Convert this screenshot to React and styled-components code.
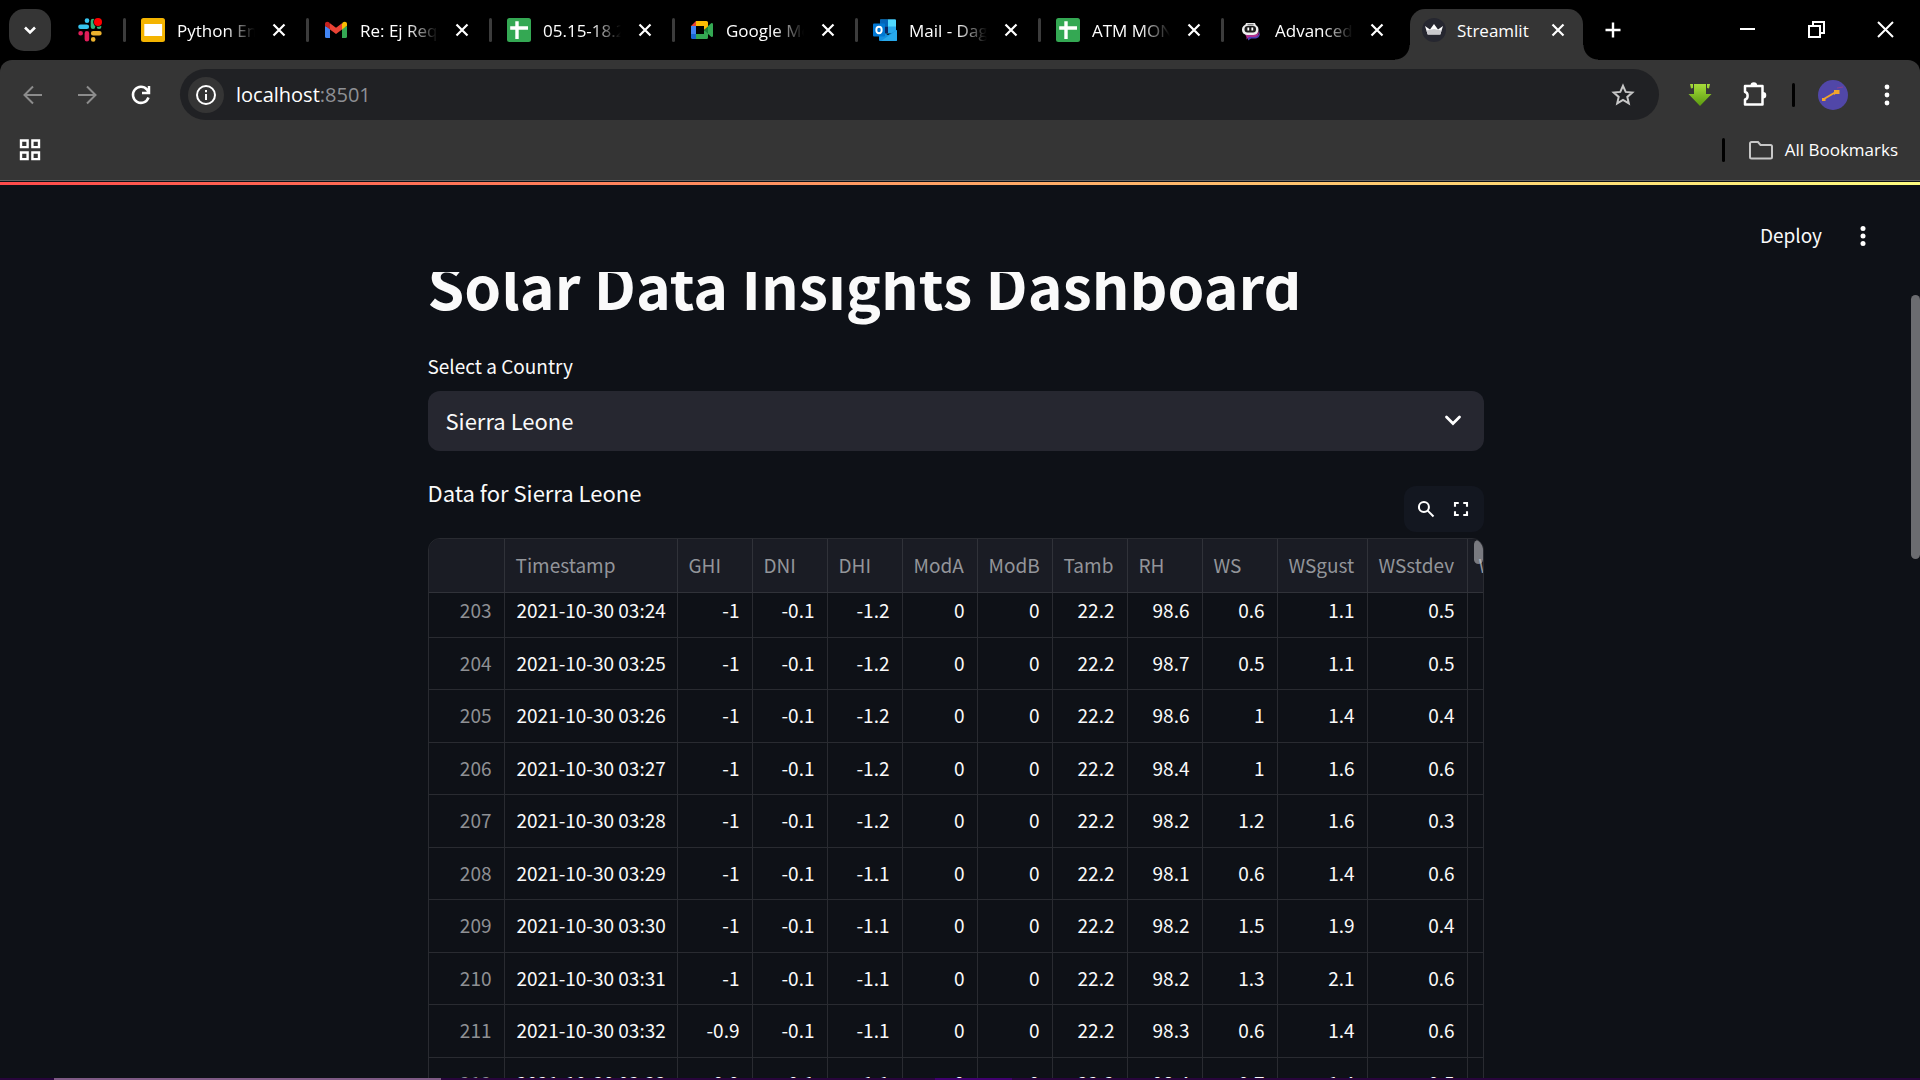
import React, { useLayoutEffect, useRef } from 'react';
import styled, { createGlobalStyle, css } from 'styled-components';

const uiFont = '"Open Sans", "Noto Sans", sans-serif';
const pageFont = '"Noto Sans CJK SC", "Noto Sans", sans-serif';

const GlobalStyle = createGlobalStyle`
  * { box-sizing: border-box; }
  html, body { margin: 0; height: 100%; background: #0e1117; }
  #root { height: 100%; }
  button, select { font: inherit; color: inherit; }
`;

/* ---------- browser frame ---------- */

const Screen = styled.div`
  display: flex;
  flex-direction: column;
  height: 100vh;
  overflow: hidden;
  background: #0e1117;
  color: #ffffff;
  font-family: ${uiFont};
`;

const TabStrip = styled.nav`
  display: flex;
  flex: none;
  height: 60px;
  padding-left: 9px;
  background: #000000;
`;

const PlainButton = styled.button`
  display: flex;
  flex: none;
  align-items: center;
  justify-content: center;
  padding: 0;
  border: 0;
  background: transparent;
`;

const TabSearch = styled(PlainButton)`
  width: 42px;
  height: 42px;
  margin: 9px 9px 0 0;
  border-radius: 15px;
  background: #353535;
`;

const Tab = styled.div`
  display: flex;
  flex: none;
  align-items: center;
  gap: 12px;
  height: 60px;
  width: ${(p) => (p.$pinned ? '66px' : '183px')};
  padding-left: ${(p) => (p.$pinned ? '18px' : '15px')};

  &::after {
    content: '';
    width: 3px;
    height: 24px;
    margin-left: ${(p) => (p.$pinned ? '9px' : '3px')};
    border-radius: 2px;
    background: ${(p) => (p.$last ? 'transparent' : '#3c3c3c')};
  }
`;

const ActiveTab = styled.div`
  position: relative;
  display: flex;
  flex: none;
  align-items: center;
  gap: 11px;
  width: 173px;
  height: 51px;
  margin: 9px 9px 0 3px;
  padding: 0 12px 9px;
  border-radius: 15px 15px 0 0;
  background: #353535;

  &::before,
  &::after {
    content: '';
    position: absolute;
    bottom: 0;
    width: 15px;
    height: 15px;
  }
  &::before {
    right: 100%;
    background: radial-gradient(circle at 0 0, transparent 14px, #353535 15px);
  }
  &::after {
    left: 100%;
    background: radial-gradient(circle at 100% 0, transparent 14px, #353535 15px);
  }
`;

const TabTitle = styled.span`
  flex: none;
  width: 78px;
  padding-top: 2px;
  overflow: hidden;
  white-space: nowrap;
  font-size: 17px;
  line-height: 24px;
  ${(p) =>
    p.$fade &&
    css`
      mask-image: linear-gradient(to right, #000 48px, transparent 78px);
    `}
`;

const TabClose = styled(PlainButton)`
  width: 24px;
  height: 24px;
`;

const NewTab = styled(PlainButton)`
  width: 42px;
  height: 42px;
  margin-top: 9px;
`;

const WindowControls = styled.div`
  display: flex;
  margin-left: auto;
`;

const WindowButton = styled(PlainButton)`
  width: 69px;
  height: 60px;
`;

const Chrome = styled.header`
  flex: none;
  border-radius: 12px 12px 0 0;
  background: #353535;
  border-bottom: 1px solid #636363;
`;

const ChromeBackdrop = styled.div`
  flex: none;
  background: #000000;
`;

const Toolbar = styled.div`
  display: flex;
  align-items: center;
  height: 60px;
  padding: 9px 12px 0;
`;

const NavGroup = styled.div`
  display: flex;
  gap: 12px;
  margin-right: 18px;
`;

const ActionGroup = styled.div`
  display: flex;
  align-items: center;
  gap: 12px;
  margin-left: 20px;
`;

const IconButton = styled(PlainButton)`
  width: 42px;
  height: 42px;
`;

const AddressBar = styled.div`
  display: flex;
  flex: 1;
  align-items: center;
  height: 51px;
  padding: 0 15px 0 8px;
  border-radius: 26px;
  background: #202124;
`;

const SiteInfo = styled(PlainButton)`
  width: 36px;
  height: 36px;
  margin-right: 12px;
  border-radius: 18px;
  background: #353535;
`;

const Url = styled.span`
  flex: 1;
  font-size: 20px;
  line-height: 28px;

  span { color: #8e9094; }
`;

const Divider = styled.span`
  flex: none;
  width: 3px;
  height: 24px;
  margin: 0 5px;
  border-radius: 2px;
  background: #000000;
`;

const BookmarksBar = styled.div`
  display: flex;
  align-items: center;
  height: 60px;
  padding: 0 22px 0 9px;
`;

const AllBookmarks = styled(PlainButton)`
  gap: 12px;
  margin-left: 19px;
  font-size: 17px;
  line-height: 24px;
`;

const Spacer = styled.span`
  flex: 1;
`;

/* ---------- dashboard ---------- */

const Decoration = styled.div`
  flex: none;
  height: 3px;
  margin-top: 1px;
  background: linear-gradient(90deg, #ff4b4b, #fffd80);
`;

const Viewport = styled.div`
  display: flex;
  flex: 1;
  min-height: 0;
  font-family: ${pageFont};
  color: #fafafa;
`;

const AppColumn = styled.div`
  display: flex;
  flex: 1;
  flex-direction: column;
  min-width: 0;
`;

const AppHeader = styled.div`
  display: flex;
  flex: none;
  align-items: center;
  justify-content: flex-end;
  gap: 20px;
  height: 87px;
  padding: 15px 27px 0 0;
`;

const Deploy = styled(PlainButton)`
  padding-bottom: 2px;
  font-size: 19px;
  line-height: 28px;
`;

const Main = styled.main`
  flex: 1;
  min-height: 0;
  overflow: hidden;
`;

const Block = styled.div`
  width: 100%;
  max-width: 1056px;
  margin: 0 auto;
`;

const Title = styled.h1`
  margin: -31px 0 23px;
  font-size: 59px;
  line-height: 88px;
  font-weight: 700;
`;

const FieldLabel = styled.label`
  display: block;
  height: 39px;
  font-size: 19px;
  line-height: 28px;
`;

const SelectBox = styled.div`
  position: relative;
  height: 60px;

  svg {
    position: absolute;
    right: 19px;
    top: 17px;
    pointer-events: none;
  }
`;

const Select = styled.select`
  appearance: none;
  width: 100%;
  height: 60px;
  padding: 0 18px 2px;
  border: 0;
  border-radius: 12px;
  background: #262730;
  font-size: 22px;
  line-height: 32px;
`;

const CaptionRow = styled.div`
  display: flex;
  justify-content: space-between;
  height: 87px;
  padding: 24px 0 6px;
`;

const Caption = styled.p`
  margin: 0;
  font-size: 22px;
  line-height: 34px;
`;

const TableTools = styled.div`
  display: flex;
  align-items: center;
  align-self: flex-end;
  justify-content: center;
  gap: 5px;
  width: 80px;
  height: 46px;
  border-radius: 12px;
  background: #131720;
`;

const ToolButton = styled(PlainButton)`
  width: 30px;
  height: 30px;
`;

const TableFrame = styled.div`
  position: relative;
  height: 600px;
  border: 1px solid #292b31;
  border-radius: 12px;
  overflow: hidden;
`;

const TableScroll = styled.div`
  height: 100%;
  overflow: hidden;
`;

const TableThumb = styled.span`
  position: absolute;
  z-index: 2;
  top: 1px;
  right: 0;
  width: 9px;
  height: 24px;
  border-radius: 5px;
  background: rgba(200, 200, 204, 0.55);
`;

const Table = styled.table`
  width: 1139px;
  table-layout: fixed;
  border-collapse: separate;
  border-spacing: 0;
  font-size: 19px;
  line-height: 28px;
`;

const HeadCell = styled.th`
  position: sticky;
  top: 0;
  z-index: 1;
  height: 54px;
  padding: 0 0 2px 11px;
  border-right: 1px solid #303239;
  border-bottom: 1px solid #303239;
  background: #1a1c24;
  color: #93959a;
  font-weight: 400;
  text-align: left;
  white-space: nowrap;
`;

const Row = styled.tr`
  height: ${(p) => (p.$tall ? '53px' : '52px')};
`;

const Cell = styled.td`
  padding: 0 12px 2px;
  border-right: 1px solid #292b31;
  border-bottom: 1px solid #292b31;
  text-align: ${(p) => (p.$left ? 'left' : 'right')};
  white-space: nowrap;
`;

const IndexCell = styled(Cell)`
  color: #8e9094;
`;

const PageScroll = styled.div`
  flex: none;
  width: 9px;
  padding-top: 110px;
`;

const PageThumb = styled.div`
  height: 264px;
  border-radius: 5px;
  background: #6b6c70;
`;

const TaskEdge = styled.footer`
  flex: none;
  display: flex;
  height: 2px;
  padding-left: 54px;
  background: #28053c;
`;

const TaskMark = styled.span`
  width: ${(p) => p.$width}px;
  margin-right: 494px;
  background: ${(p) => p.$color};
`;

/* ---------- icons ---------- */

const Stroke = ({ size = 24, width = 2, color = '#fff', children }) => (
  <svg width={size} height={size} viewBox="0 0 24 24" fill="none" stroke={color} strokeWidth={width} aria-hidden="true">
    {children}
  </svg>
);

const Cross = () => (
  <Stroke width={2.2}>
    <path d="M6.5 6.5l11 11M17.5 6.5l-11 11" />
  </Stroke>
);

const Dots = ({ r = 2.4, gap = 8 }) => (
  <svg width="24" height="24" viewBox="0 0 24 24" fill="#fff" aria-hidden="true">
    <circle cx="12" cy={12 - gap} r={r} />
    <circle cx="12" cy="12" r={r} />
    <circle cx="12" cy={12 + gap} r={r} />
  </svg>
);

const FaviconSvg = styled.svg`
  flex: none;
  width: 24px;
  height: 24px;
`;

const Favicon = ({ children }) => (
  <FaviconSvg viewBox="0 0 24 24" aria-hidden="true">
    {children}
  </FaviconSvg>
);

const SlackIcon = () => (
  <Favicon>
    <g strokeWidth="4.6" strokeLinecap="round">
      <path d="M9 2.6v0.1M2.5 8.8h6.3" stroke="#36c5f0" />
      <path d="M15 8.8V3M21 8.8h.1" stroke="#2eb67d" />
      <path d="M15.2 15.3h6.2M15.2 21.3v.1" stroke="#ecb22e" />
      <path d="M2.6 15.3h.1M8.9 15.3v6" stroke="#e01e5a" />
    </g>
    <circle cx="20" cy="4" r="4.8" fill="#000" />
    <circle cx="20" cy="4" r="4" fill="#ff0000" />
  </Favicon>
);

const SlidesIcon = () => (
  <Favicon>
    <rect width="24" height="24" rx="2.5" fill="#f4b400" />
    <rect x="3.3" y="6" width="17.8" height="12" fill="#fff" />
  </Favicon>
);

const GmailIcon = () => (
  <Favicon>
    <path d="M1 8v10.5A1.500 1.500 0 0 0 2.500 20H6V10z" fill="#4285f4" />
    <path d="M23 8v10.500a1.500 1.500 0 0 1-1.500 1.500H18V10z" fill="#34a853" />
    <path d="M18 5.500V11.500l5-3.800V6c0-2.400-2.500-3-4-1.700z" fill="#fbbc04" />
    <path d="M6 5.500V11.500L1 7.700V6c0-2.400 2.500-3 4-1.700z" fill="#c5221f" />
    <path d="M6 11.500V5.300l6 4.500 6-4.500v6.200L12 16z" fill="#ea4335" />
  </Favicon>
);

const SheetsIcon = () => (
  <Favicon>
    <rect width="24" height="24" rx="2.500" fill="#34a853" />
    <path d="M10 3.200V21M3.200 10H21" stroke="#fff" strokeWidth="3.400" />
  </Favicon>
);

const MeetIcon = () => (
  <Favicon>
    <path d="M1 8l5-5v5z" fill="#ea4335" />
    <path d="M1 8h5v8H1z" fill="#4285f4" />
    <path d="M1 16h5v5H2.500A1.500 1.500 0 0 1 1 19.500z" fill="#1967d2" />
    <path d="M6 3h10.500A1.500 1.500 0 0 1 18 4.500v5L14 12V8H6z" fill="#fbbc04" />
    <path d="M6 16h8v-4l4 2.500v5a1.500 1.500 0 0 1-1.500 1.500H6z" fill="#34a853" />
    <path d="M14 12l7-6.500c.8-.7 2-.2 2 .800v11.400c0 1-1.200 1.500-2 .800z" fill="#188038" />
    <path d="M18 8.300l3-2.800c.8-.7 2-.2 2 .800v11.400c0 1-1.200 1.500-2 .800l-3-2.800z" fill="#34a853" />
  </Favicon>
);

const OutlookIcon = () => (
  <Favicon>
    <rect x="7" y="1.500" width="16" height="14" rx="1" fill="#28a8ea" />
    <path d="M7 1.500h8v7H7z" fill="#0364b8" />
    <path d="M15 1.500h7a1 1 0 0 1 1 1v6h-8z" fill="#50d9ff" />
    <path d="M7 8.500h8V15H7z" fill="#0a2767" />
    <path d="M6 12l9 5 9-5v10a1 1 0 0 1-1 1H7a1 1 0 0 1-1-1z" fill="#1490df" />
    <path d="M24 12v10a1 1 0 0 1-1 1H8z" fill="#28a8ea" />
    <rect y="5.500" width="12" height="13" rx="1" fill="#0078d4" />
    <ellipse cx="6" cy="12" rx="2.700" ry="3.200" fill="none" stroke="#fff" strokeWidth="1.900" />
  </Favicon>
);

const BotIcon = () => (
  <Favicon>
    <path d="M8 18h8c3.500 0 5-2 5-7v3c0 5-2 6.500-6 6.500h-3l-3 2V20z" fill="#4c3fb5" />
    <path d="M6 16h9c3 0 5-1 5-4v2c0 3-2 5-5 5h-5l-2.500 2.500V19z" fill="#b0308f" />
    <path d="M7 5h9l1 3H6z" fill="#e4e4e4" />
    <rect x="3" y="6.500" width="16.500" height="10.500" rx="5" fill="#eeeeee" />
    <rect x="5.500" y="8" width="11.500" height="6.500" rx="3" fill="#1b1b1b" />
    <path d="M9.300 9.500v3M13.300 9.500v3" stroke="#fff" strokeWidth="1.800" />
    <path d="M8.500 6.800h6" stroke="#444" strokeWidth="0.900" />
  </Favicon>
);

const CrownIcon = () => (
  <Favicon>
    <circle cx="12" cy="12" r="12" fill="#262730" />
    <path d="M3 8l5 3.500L12 6l4 5.500L21 8l-2.700 8.500H5.700z" fill="#ffffff" />
    <path d="M4.500 12.500L12 11l7.500 1.500-1.200 4H5.700z" fill="#c9c9cd" />
  </Favicon>
);

const DownloadArrow = () => (
  <svg width="24" height="24" viewBox="0 0 24 24" aria-hidden="true">
    <defs>
      <linearGradient id="arrowFill" x1="0" y1="0" x2="0" y2="1">
        <stop offset="0" stopColor="#a6dc3a" />
        <stop offset="1" stopColor="#5a9a10" />
      </linearGradient>
    </defs>
    <path d="M2 1h3v4l-2 .5zM22 1h-3v4l2 .5zM6 1h12v10h5.500L12 23 .5 11H6z" fill="url(#arrowFill)" />
  </svg>
);

/* ---------- data ---------- */

const tabs = [
  { title: 'Python Engineering', Icon: SlidesIcon },
  { title: 'Re: Ej Request', Icon: GmailIcon },
  { title: '05.15-18.24', Icon: SheetsIcon },
  { title: 'Google Meet', Icon: MeetIcon },
  { title: 'Mail - Dagmawi', Icon: OutlookIcon },
  { title: 'ATM MONITOR', Icon: SheetsIcon },
  { title: 'Advanced Data', Icon: BotIcon },
];

const columns = [
  ['', 76],
  ['Timestamp', 173],
  ['GHI', 75],
  ['DNI', 75],
  ['DHI', 75],
  ['ModA', 75],
  ['ModB', 75],
  ['Tamb', 75],
  ['RH', 75],
  ['WS', 75],
  ['WSgust', 90],
  ['WSstdev', 100],
  ['WD', 100],
];

const rows = [
  [203, '2021-10-30 03:24', '-1', '-0.1', '-1.2', '0', '0', '22.2', '98.6', '0.6', '1.1', '0.5'],
  [204, '2021-10-30 03:25', '-1', '-0.1', '-1.2', '0', '0', '22.2', '98.7', '0.5', '1.1', '0.5'],
  [205, '2021-10-30 03:26', '-1', '-0.1', '-1.2', '0', '0', '22.2', '98.6', '1', '1.4', '0.4'],
  [206, '2021-10-30 03:27', '-1', '-0.1', '-1.2', '0', '0', '22.2', '98.4', '1', '1.6', '0.6'],
  [207, '2021-10-30 03:28', '-1', '-0.1', '-1.2', '0', '0', '22.2', '98.2', '1.2', '1.6', '0.3'],
  [208, '2021-10-30 03:29', '-1', '-0.1', '-1.1', '0', '0', '22.2', '98.1', '0.6', '1.4', '0.6'],
  [209, '2021-10-30 03:30', '-1', '-0.1', '-1.1', '0', '0', '22.2', '98.2', '1.5', '1.9', '0.4'],
  [210, '2021-10-30 03:31', '-1', '-0.1', '-1.1', '0', '0', '22.2', '98.2', '1.3', '2.1', '0.6'],
  [211, '2021-10-30 03:32', '-0.9', '-0.1', '-1.1', '0', '0', '22.2', '98.3', '0.6', '1.4', '0.6'],
  [212, '2021-10-30 03:33', '-0.9', '-0.1', '-1.1', '0', '0', '22.2', '98.4', '0.7', '1.4', '0.5'],
  [213, '2021-10-30 03:34', '-0.9', '-0.1', '-1.1', '0', '0', '22.2', '98.4', '0.7', '1.4', '0.5'],
];

function DataTable() {
  const scroller = useRef(null);

  useLayoutEffect(() => {
    scroller.current.scrollTop = 8;
  }, []);

  return (
    <TableFrame>
      <TableScroll ref={scroller}>
        <Table>
          <colgroup>
            {columns.map(([name, width]) => (
              <col key={name} style={{ width }} />
            ))}
          </colgroup>
          <thead>
            <tr>
              {columns.map(([name]) => (
                <HeadCell key={name} scope="col">{name}</HeadCell>
              ))}
            </tr>
          </thead>
          <tbody>
            {rows.map(([index, time, ...values], i) => (
              <Row key={index} $tall={i % 2 === 0}>
                <IndexCell>{index}</IndexCell>
                <Cell $left>{time}</Cell>
                {values.map((value, n) => (
                  <Cell key={n}>{value}</Cell>
                ))}
                <Cell />
              </Row>
            ))}
          </tbody>
        </Table>
      </TableScroll>
      <TableThumb />
    </TableFrame>
  );
}

export default function App() {
  return (
    <Screen>
      <GlobalStyle />
      <TabStrip>
        <TabSearch aria-label="Search tabs">
          <Stroke width={2.6}><path d="M7 9.500l5 5 5-5" /></Stroke>
        </TabSearch>
        <Tab $pinned><SlackIcon /></Tab>
        {tabs.map(({ title, Icon }, i) => (
          <Tab key={title} $last={i === tabs.length - 1}>
            <Icon />
            <TabTitle $fade>{title}</TabTitle>
            <TabClose aria-label="Close tab"><Cross /></TabClose>
          </Tab>
        ))}
        <ActiveTab>
          <CrownIcon />
          <TabTitle>Streamlit</TabTitle>
          <TabClose aria-label="Close tab"><Cross /></TabClose>
        </ActiveTab>
        <NewTab aria-label="New tab">
          <Stroke width={2.4}><path d="M12 4.500v15M4.500 12h15" /></Stroke>
        </NewTab>
        <WindowControls>
          <WindowButton aria-label="Minimize">
            <Stroke><path d="M4 11h15" /></Stroke>
          </WindowButton>
          <WindowButton aria-label="Restore">
            <Stroke><path d="M4 8h11v11H4zM8 8V4h11v11h-4" /></Stroke>
          </WindowButton>
          <WindowButton aria-label="Close">
            <Stroke><path d="M4 4l15 15M19 4L4 19" /></Stroke>
          </WindowButton>
        </WindowControls>
      </TabStrip>

      <ChromeBackdrop>
        <Chrome>
          <Toolbar>
            <NavGroup>
              <IconButton aria-label="Back">
                <Stroke color="#8c8c8c"><path d="M21 12H4M12 3.500L3.500 12l8.500 8.500" /></Stroke>
              </IconButton>
              <IconButton aria-label="Forward">
                <Stroke color="#8c8c8c"><path d="M3 12h17M12 3.500l8.500 8.500-8.500 8.500" /></Stroke>
              </IconButton>
              <IconButton aria-label="Reload">
                <Stroke width={2.5}><path d="M19.500 14.500A8 8 0 1 1 18 6.600l1.500 2.400M20 3v7h-7" /></Stroke>
              </IconButton>
            </NavGroup>
            <AddressBar>
              <SiteInfo aria-label="Site information">
                <Stroke><circle cx="12" cy="12" r="9" /><path d="M12 11v6M12 7v2.200" /></Stroke>
              </SiteInfo>
              <Url>localhost<span>:8501</span></Url>
              <IconButton aria-label="Bookmark this page">
                <Stroke color="#c7c7c7"><path d="M12 2.800l2.700 6.100 6.600.600-5 4.400 1.500 6.500-5.800-3.400-5.800 3.400 1.500-6.500-5-4.400 6.600-.600z" /></Stroke>
              </IconButton>
            </AddressBar>
            <ActionGroup>
              <IconButton aria-label="Downloader"><DownloadArrow /></IconButton>
              <IconButton aria-label="Extensions">
                <svg width="27" height="27" viewBox="0 0 27 27" aria-hidden="true">
                  <path d="M4 5h17.500v18.500H4v-5c3.500-.500 3.500-7 0-7.500z" fill="none" stroke="#fff" strokeWidth="2.500" strokeLinejoin="round" />
                  <path d="M9.500 4.500a3.300 3.300 0 0 1 6.600 0zM22 11a3.300 3.300 0 0 1 0 6.600z" fill="#fff" />
                </svg>
              </IconButton>
              <Divider />
              <IconButton aria-label="Profile">
                <svg width="30" height="30" viewBox="0 0 30 30" aria-hidden="true">
                  <circle cx="15" cy="15" r="15" fill="#5147a8" />
                  <path d="M5 19.500l12-7" stroke="#f2a52c" strokeWidth="2" />
                  <path d="M16 10h5.500v4h-4l-1.500 1zM4 18h3.500v3H4z" fill="#f2a52c" />
                  <path d="M19 8l6-1" stroke="#93408e" strokeWidth="1" />
                </svg>
              </IconButton>
              <IconButton aria-label="Browser menu"><Dots /></IconButton>
            </ActionGroup>
          </Toolbar>
          <BookmarksBar>
            <IconButton aria-label="Apps">
              <Stroke width={2.4}><path d="M3 2.500h6.600v6.600H3zM14.400 2.500H21v6.600h-6.600zM3 14.500h6.600v6.600H3zM14.400 14.500H21v6.600h-6.600z" /></Stroke>
            </IconButton>
            <Spacer />
            <Divider />
            <AllBookmarks>
              <Stroke color="#c7c7c7"><path d="M1 5.500a1.500 1.500 0 0 1 1.500-1.500H9l2.500 3h10A1.500 1.500 0 0 1 23 8.500v10.500a1.500 1.500 0 0 1-1.500 1.500h-19A1.500 1.500 0 0 1 1 19z" /></Stroke>
              All Bookmarks
            </AllBookmarks>
          </BookmarksBar>
        </Chrome>
      </ChromeBackdrop>

      <Decoration />
      <Viewport>
        <AppColumn>
          <AppHeader>
            <Deploy>Deploy</Deploy>
            <IconButton aria-label="App menu"><Dots r={2.5} gap={7.5} /></IconButton>
          </AppHeader>
          <Main>
            <Block>
              <Title>Solar Data Insights Dashboard</Title>
              <FieldLabel htmlFor="country">Select a Country</FieldLabel>
              <SelectBox>
                <Select id="country" defaultValue="Sierra Leone">
                  <option>Sierra Leone</option>
                </Select>
                <Stroke width={2.8}><path d="M5.500 9l6.500 6.500L18.500 9" strokeLinecap="round" /></Stroke>
              </SelectBox>
              <CaptionRow>
                <Caption>Data for Sierra Leone</Caption>
                <TableTools>
                  <ToolButton aria-label="Search table">
                    <Stroke size={20} width={2.4}><circle cx="9.500" cy="9.500" r="6" /><path d="M14 14l7 7" /></Stroke>
                  </ToolButton>
                  <ToolButton aria-label="Fullscreen">
                    <Stroke size={18} width={2.8}><path d="M4 9V4h5M15 4h5v5M20 15v5h-5M9 20H4v-5" /></Stroke>
                  </ToolButton>
                </TableTools>
              </CaptionRow>
              <DataTable />
            </Block>
          </Main>
        </AppColumn>
        <PageScroll><PageThumb /></PageScroll>
      </Viewport>
      <TaskEdge>
        <TaskMark $width={387} $color="#7f5a85" />
        <TaskMark $width={77} $color="#40006e" />
      </TaskEdge>
    </Screen>
  );
}
